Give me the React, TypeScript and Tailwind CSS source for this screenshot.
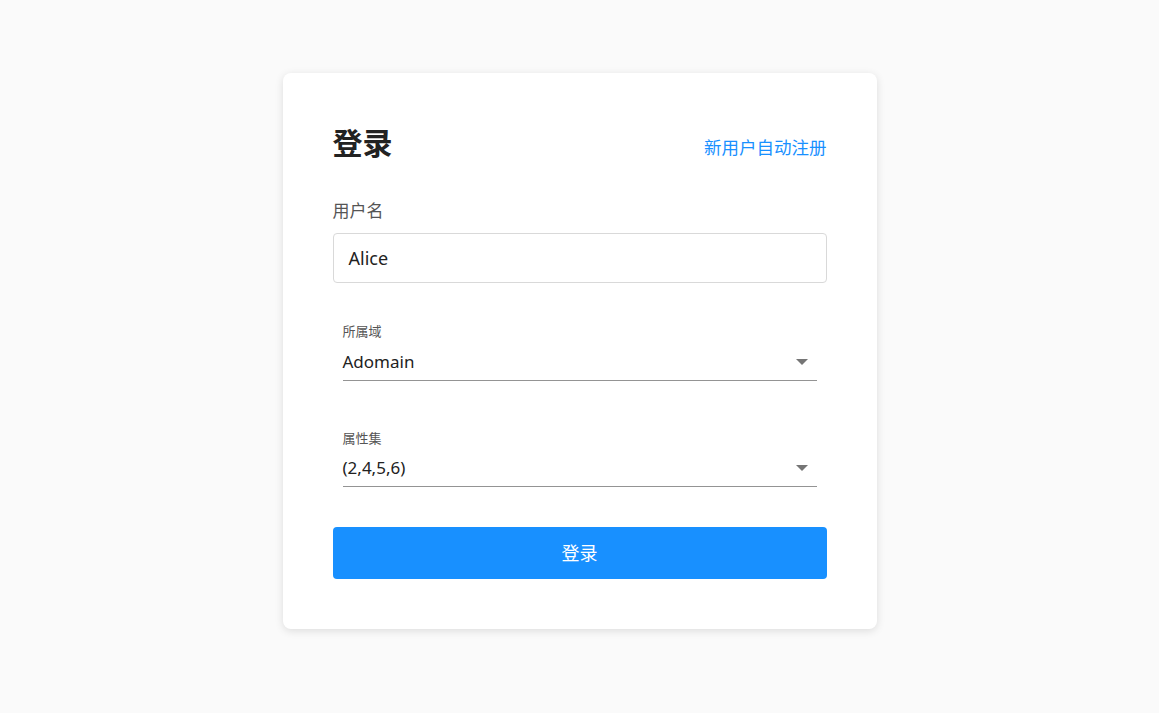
import React from "react";

const font = { fontFamily: '"Noto Sans", "Noto Sans CJK SC", sans-serif' };

function Arrow() {
  return (
    <svg width="12" height="6" viewBox="0 0 12 6" className="mr-[9px]">
      <path d="M0 0 L12 0 L6 6 Z" fill="#757575" />
    </svg>
  );
}

function SelectField({ label, value, pt }: { label: string; value: string; pt: string }) {
  return (
    <div className="mx-[10px]">
      <div className="text-[13px] leading-[16px] text-[#555]">{label}</div>
      <div className={`flex items-center justify-between ${pt} pb-[6px] border-b border-[#949494]`}>
        <span className="text-[17px] leading-[24px] text-[#222]">{value}</span>
        <Arrow />
      </div>
    </div>
  );
}

export default function App() {
  return (
    <div className="min-h-[713px] bg-[#fafafa] pt-[73px]" style={font}>
      <div className="mx-auto w-[594px] bg-white rounded-[8px] shadow-[0_2px_8px_rgba(0,0,0,0.12)] px-[50px] pt-[50px] pb-[50px]">
        <div className="flex h-[40px] items-center justify-between">
          <h1 className="text-[30px] font-bold text-[#222] leading-[40px]">登录</h1>
          <a className="text-[17.5px] text-[#1890ff] mt-[8px]">新用户自动注册</a>
        </div>
        <div className="mt-[36px] text-[17px] leading-[24px] text-[#555]">用户名</div>
        <div className="mt-[10px] h-[50px] rounded-[4px] border border-[#d9d9d9] flex items-center px-[15px] text-[18px] text-[#222]">
          Alice
        </div>
        <div className="mt-[40px]">
          <SelectField label="所属域" value="Adomain" pt="pt-[11px]" />
        </div>
        <div className="mt-[49px]">
          <SelectField label="属性集" value="(2,4,5,6)" pt="pt-[10px]" />
        </div>
        <button className="mt-[40px] w-full h-[52px] rounded-[4px] bg-[#1890ff] text-white text-[18px]">
          登录
        </button>
      </div>
    </div>
  );
}
